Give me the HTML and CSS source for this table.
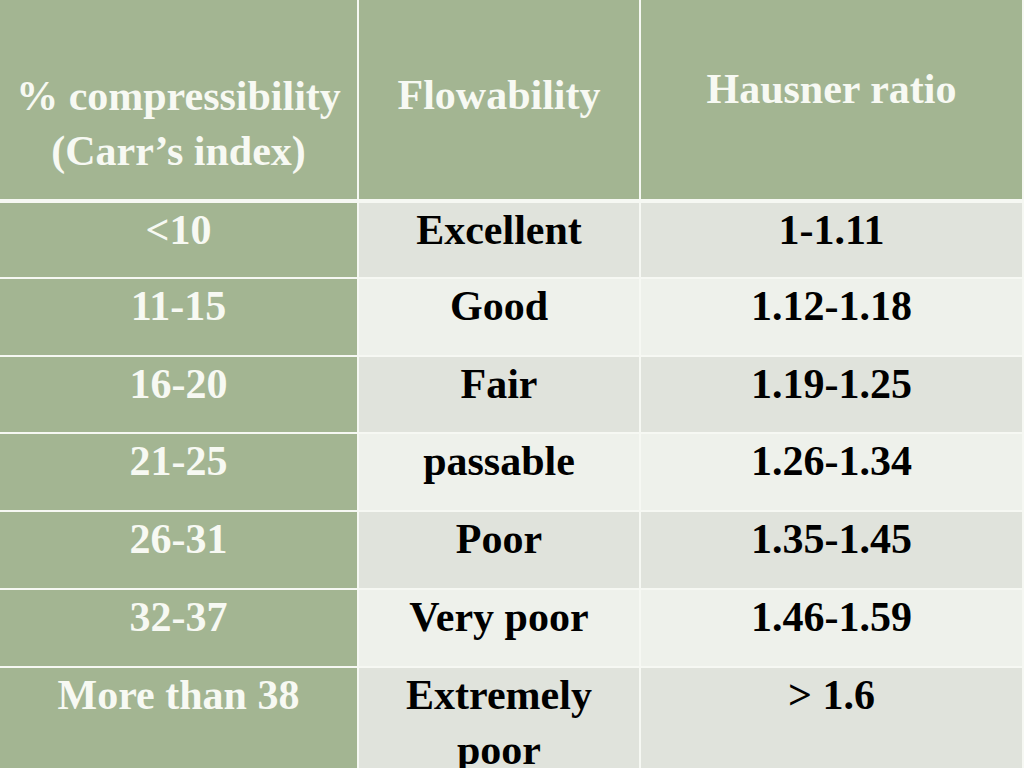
FILE: index.html
```html
<!DOCTYPE html>
<html>
<head>
<meta charset="utf-8">
<link rel="stylesheet" href="styles.css">
</head>
<body>
<div class="table">
  <div class="cell head h1"><div class="txt">% compressibility<br>(Carr’s index)</div></div>
  <div class="cell head h2"><div class="txt">Flowability</div></div>
  <div class="cell head h3"><div class="txt">Hausner ratio</div></div>

  <div class="cell key"><div class="txt">&lt;10</div></div>
  <div class="cell dark"><div class="txt">Excellent</div></div>
  <div class="cell dark"><div class="txt">1-1.11</div></div>

  <div class="cell key"><div class="txt">11-15</div></div>
  <div class="cell light"><div class="txt">Good</div></div>
  <div class="cell light"><div class="txt">1.12-1.18</div></div>

  <div class="cell key"><div class="txt">16-20</div></div>
  <div class="cell dark"><div class="txt">Fair</div></div>
  <div class="cell dark"><div class="txt">1.19-1.25</div></div>

  <div class="cell key"><div class="txt">21-25</div></div>
  <div class="cell light"><div class="txt">passable</div></div>
  <div class="cell light"><div class="txt">1.26-1.34</div></div>

  <div class="cell key"><div class="txt">26-31</div></div>
  <div class="cell dark"><div class="txt">Poor</div></div>
  <div class="cell dark"><div class="txt">1.35-1.45</div></div>

  <div class="cell key"><div class="txt">32-37</div></div>
  <div class="cell light"><div class="txt">Very poor</div></div>
  <div class="cell light"><div class="txt">1.46-1.59</div></div>

  <div class="cell key"><div class="txt">More than 38</div></div>
  <div class="cell dark"><div class="txt">Extremely<br>poor</div></div>
  <div class="cell dark"><div class="txt">&gt; 1.6</div></div>
</div>
</body>
</html>
```
FILE: styles.css
```css
html, body {
  margin: 0;
  padding: 0;
  background: #f6f8f3;
  width: 1024px;
  height: 768px;
  overflow: hidden;
}

.table {
  display: grid;
  width: 1022px;
  grid-template-columns: 357px 280px 381px;
  grid-template-rows: 201px 74px 76px 75px 76px 76px 76px 120px;
  column-gap: 2px;
  row-gap: 2px;
  background: #f6f8f3;
  font-family: "Liberation Serif", "Times New Roman", serif;
  font-weight: bold;
  font-size: 42px;
  line-height: 55px;
  text-align: center;
}

.cell {
  box-sizing: border-box;
  overflow: hidden;
}

.txt {
  margin-top: 0;
  white-space: nowrap;
}

.head {
  background: #a3b592;
  color: #f7f9f3;
  border-bottom: 2px solid #f6f8f3;
}

.h1 { padding-top: 69px; }
.h2 { padding-top: 68px; }
.h3 { padding-top: 62px; }

.key {
  background: #a3b592;
  color: #f7f9f3;
}

.dark {
  background: #e0e3dc;
  color: #000000;
}

.light {
  background: #eef1eb;
  color: #000000;
}
```
